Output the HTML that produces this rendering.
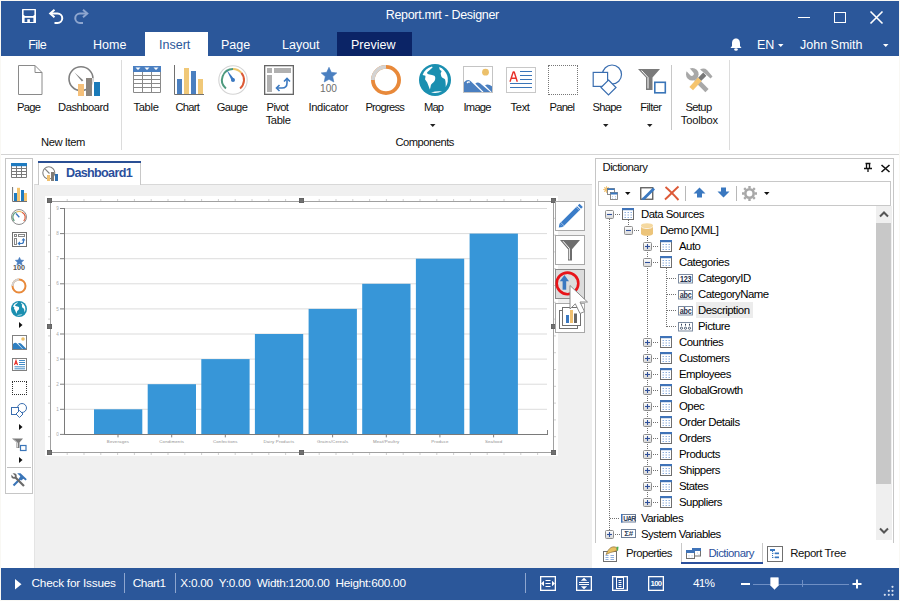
<!DOCTYPE html>
<html><head><meta charset="utf-8"><title>Report.mrt - Designer</title>
<style>
*{margin:0;padding:0;box-sizing:border-box}
html,body{width:900px;height:601px;overflow:hidden}
body{position:relative;background:#f9f8f4;font-family:"Liberation Sans",sans-serif;color:#222}
.a{position:absolute}
.t{position:absolute;white-space:nowrap}
svg{overflow:visible}
</style></head><body>
<div class="a" style="left:1px;top:1px;width:898px;height:55px;background:#2b579a"></div>
<svg class="a" style="left:22px;top:9px" width="15" height="15" viewBox="0 0 15 15"><path d="M0.5 0H13.5Q14 0 14 0.5V13.5Q14 14 13.5 14H0.5Q0 14 0 13.5V0.5Q0 0 0.5 0Z" fill="#fff"/><path d="M1.6 1.3H12.4V5.6L11.2 7H2.8L1.6 5.6Z" fill="#2b579a"/><path d="M2.6 8.8H11.4V13H2.6Z" fill="#2b579a"/><rect x="5.3" y="10.2" width="2.6" height="2.8" fill="#fff"/></svg>
<svg class="a" style="left:49px;top:9px" width="15" height="15" viewBox="0 0 15 15"><path d="M2 4.5H8.5A4.75 4.75 0 0 1 8.5 14H5.5" fill="none" stroke="#fff" stroke-width="2"/><path d="M5.5 0.8L1.2 4.5L5.5 8.2" fill="none" stroke="#fff" stroke-width="2"/></svg>
<svg class="a" style="left:74px;top:9px" width="15" height="15" viewBox="0 0 15 15"><path d="M12.5 4.5H6A4.75 4.75 0 0 0 6 14H9" fill="none" stroke="#8ea6cf" stroke-width="2"/><path d="M9 0.8L13.3 4.5L9 8.2" fill="none" stroke="#8ea6cf" stroke-width="2"/></svg>
<div class="t" style="left:385.8px;top:9.42px;font-size:12.5px;line-height:12.5px;color:#fff;letter-spacing:-0.338px;">Report.mrt - Designer</div>
<div class="a" style="left:798px;top:17px;width:12px;height:1px;background:#fff"></div>
<div class="a" style="left:834px;top:12px;width:12px;height:11px;border:1px solid #fff"></div>
<svg class="a" style="left:870px;top:11px" width="13" height="13" viewBox="0 0 13 13"><path d="M0.5 0.5L12.5 12.5M12.5 0.5L0.5 12.5" stroke="#fff" stroke-width="1.6"/></svg>
<div class="a" style="left:145px;top:32px;width:63px;height:24px;background:#fff"></div>
<div class="a" style="left:337px;top:32px;width:75px;height:24px;background:#0b2466"></div>
<div class="t" style="left:28.3px;top:39.22px;font-size:12.5px;line-height:12.5px;color:#fff;letter-spacing:-0.583px;">File</div>
<div class="t" style="left:93px;top:39.02px;font-size:12.5px;line-height:12.5px;color:#fff;">Home</div>
<div class="t" style="left:159px;top:39.02px;font-size:12.5px;line-height:12.5px;color:#2b579a;">Insert</div>
<div class="t" style="left:221px;top:39.02px;font-size:12.5px;line-height:12.5px;color:#fff;">Page</div>
<div class="t" style="left:282px;top:39.02px;font-size:12.5px;line-height:12.5px;color:#fff;">Layout</div>
<div class="t" style="left:351px;top:38.72px;font-size:12.5px;line-height:12.5px;color:#fff;">Preview</div>
<svg class="a" style="left:730px;top:38px" width="12" height="13" viewBox="0 0 12 13"><path d="M6 0.5C3 0.5 2 3 2 5.5V8L0.5 10H11.5L10 8V5.5C10 3 9 0.5 6 0.5Z" fill="#fff"/><ellipse cx="6" cy="11.5" rx="1.8" ry="1.2" fill="#fff"/></svg>
<div class="t" style="left:757px;top:39.02px;font-size:12.5px;line-height:12.5px;color:#fff;">EN</div>
<svg class="a" style="left:778px;top:44px" width="6" height="4" viewBox="0 0 6 4"><path d="M0 0H5.5L2.75 3Z" fill="#fff"/></svg>
<div class="t" style="left:800px;top:39.02px;font-size:12.5px;line-height:12.5px;color:#fff;">John Smith</div>
<svg class="a" style="left:883px;top:44px" width="6" height="4" viewBox="0 0 6 4"><path d="M0 0H5.5L2.75 3Z" fill="#fff"/></svg>
<div class="a" style="left:1px;top:56px;width:898px;height:98px;background:#fff"></div>
<div class="a" style="left:1px;top:154px;width:898px;height:1px;background:#d4d4d4"></div>
<svg class="a" style="left:18px;top:65px" width="25" height="31" viewBox="0 0 25 31"><path d="M0.5 0.5H17L24 7.5V29.5H0.5Z" fill="#fff" stroke="#8a8a8a"/><path d="M17 0.5V7.5H24" fill="none" stroke="#8a8a8a"/></svg>
<div class="t" style="left:-71px;width:200px;text-align:center;top:101.82px;font-size:11.2px;line-height:11.2px;color:#111;letter-spacing:-0.717px;text-indent:-0.717px;">Page</div>
<svg class="a" style="left:68px;top:65px" width="34" height="32" viewBox="0 0 34 32"><circle cx="13" cy="13.7" r="12" fill="none" stroke="#808080" stroke-width="1.6"/><path d="M6.3 7.3L15.3 15.2L13.9 16.6Z" fill="#808080"/><rect x="10" y="19" width="6" height="12" fill="#f5c07a"/><rect x="18" y="13" width="6" height="18" fill="#8a847e"/><rect x="26" y="17" width="6" height="14" fill="#1a7ab8"/><path d="M24.9 13V20" stroke="#fff" stroke-width="1.2"/></svg>
<div class="t" style="left:-16.5px;width:200px;text-align:center;top:101.82px;font-size:11.2px;line-height:11.2px;color:#111;letter-spacing:-0.475px;text-indent:-0.475px;">Dashboard</div>
<div class="a" style="left:121px;top:60px;width:1px;height:90px;background:#dcdcdc"></div>
<div class="t" style="left:-36.8px;width:200px;text-align:center;top:137.22px;font-size:11.2px;line-height:11.2px;color:#111;letter-spacing:-0.429px;text-indent:-0.429px;">New Item</div>
<svg class="a" style="left:133px;top:66px" width="28" height="27" viewBox="0 0 28 27"><rect x="0" y="0" width="28" height="6" fill="#4a7fc1"/><path d="M2.5 1.5H7.5L5 4Z M11.5 1.5H16.5L14 4Z M20.5 1.5H25.5L23 4Z" fill="#fff"/><path d="M0.5 6V26.5H27.5V6 M0.5 9.5H27.5 M0.5 13.5H27.5 M0.5 17.5H27.5 M0.5 21.5H27.5 M9.5 6V26.5 M18.5 6V26.5" fill="none" stroke="#8a8a8a" stroke-width="1"/></svg>
<div class="t" style="left:46.19999999999999px;width:200px;text-align:center;top:101.82px;font-size:11.2px;line-height:11.2px;color:#111;letter-spacing:-0.300px;text-indent:-0.300px;">Table</div>
<svg class="a" style="left:173px;top:65px" width="32" height="31" viewBox="0 0 32 31"><path d="M1.5 0V29.5H31" fill="none" stroke="#707070" stroke-width="1"/><rect x="4" y="14" width="5" height="15" fill="#4a7fc0"/><rect x="11" y="3" width="5" height="26" fill="#f0c878"/><rect x="18" y="6" width="5" height="23" fill="#4a7fc0"/><rect x="25" y="14" width="5" height="15" fill="#f0c878"/></svg>
<div class="t" style="left:87.69999999999999px;width:200px;text-align:center;top:101.82px;font-size:11.2px;line-height:11.2px;color:#111;letter-spacing:-0.700px;text-indent:-0.700px;">Chart</div>
<svg class="a" style="left:218px;top:65px" width="30" height="30" viewBox="0 0 30 30"><circle cx="15" cy="15" r="14.2" fill="none" stroke="#d4d4d4" stroke-width="1.1"/><path d="M7.93 23.43A11 11 0 0 1 15.00 4.00" fill="none" stroke="#4e9a7e" stroke-width="2"/><path d="M15.00 4.00A11 11 0 0 1 23.43 7.93" fill="none" stroke="#ecc46a" stroke-width="2"/><path d="M23.43 7.93A11 11 0 0 1 22.07 23.43" fill="none" stroke="#dc5a36" stroke-width="2"/><path d="M8.4 4.6L16.1 14.1L13.9 15.9Z" fill="#3a78c0"/><circle cx="15" cy="15" r="2" fill="#3a78c0"/></svg>
<div class="t" style="left:132.3px;width:200px;text-align:center;top:101.82px;font-size:11.2px;line-height:11.2px;color:#111;letter-spacing:-0.562px;text-indent:-0.562px;">Gauge</div>
<svg class="a" style="left:264px;top:65px" width="30" height="30" viewBox="0 0 30 30"><rect x="0.65" y="0.65" width="28.7" height="28.7" fill="#fff" stroke="#666" stroke-width="1.3"/><rect x="3" y="3" width="5" height="5" fill="#b0b0b0"/><rect x="10" y="3" width="17" height="5" fill="#b0b0b0"/><rect x="3" y="10" width="5" height="17" fill="#b0b0b0"/><path d="M13 23H18Q23 23 23 18V14" fill="none" stroke="#3a78c0" stroke-width="1.6"/><path d="M15.5 20L12.5 23L15.5 26 M20 16.5L23 13.5L26 16.5" fill="none" stroke="#3a78c0" stroke-width="1.6"/></svg>
<div class="t" style="left:177.8px;width:200px;text-align:center;top:101.82px;font-size:11.2px;line-height:11.2px;color:#111;letter-spacing:-0.625px;text-indent:-0.625px;">Pivot</div>
<div class="t" style="left:178.3px;width:200px;text-align:center;top:114.82px;font-size:11.2px;line-height:11.2px;color:#111;letter-spacing:-0.350px;text-indent:-0.350px;">Table</div>
<svg class="a" style="left:321px;top:67px" width="16" height="16" viewBox="0 0 16 16"><path d="M8 0.3L10.3 5.3L15.8 5.9L11.7 9.6L12.8 15L8 12.3L3.2 15L4.3 9.6L0.2 5.9L5.7 5.3Z" fill="#4a7fc0" stroke="#4a7fc0" stroke-width="0.6" stroke-linejoin="round"/></svg>
<div class="t" style="left:228.5px;width:200px;text-align:center;top:84.17px;font-size:10.2px;line-height:10.2px;color:#6e6e6e;">100</div>
<div class="t" style="left:228.45px;width:200px;text-align:center;top:101.82px;font-size:11.2px;line-height:11.2px;color:#111;letter-spacing:-0.381px;text-indent:-0.381px;">Indicator</div>
<svg class="a" style="left:370px;top:64px" width="32" height="32" viewBox="0 0 32 32"><circle cx="16" cy="16" r="13.1" fill="none" stroke="#e8893a" stroke-width="3.8"/><path d="M16 2.9A13.1 13.1 0 0 0 2.9 16" fill="none" stroke="#d3d3d3" stroke-width="3.8"/></svg>
<div class="t" style="left:285.15px;width:200px;text-align:center;top:101.82px;font-size:11.2px;line-height:11.2px;color:#111;letter-spacing:-0.757px;text-indent:-0.757px;">Progress</div>
<svg class="a" style="left:419px;top:64px" width="32" height="32" viewBox="0 0 32 32"><circle cx="16" cy="16" r="16" fill="#1a8fb0"/><path d="M13 2.6A13.5 13.5 0 0 0 3.6 11L6.4 11.8C6.6 13 6.1 14.5 6.1 15.4C6.8 16.5 7.6 17.4 8.2 18.4C9.2 20.5 10 23 10.9 25.5C11.5 24 11.6 22.2 12 20.8C13.2 19 15.5 17.8 16 16C16.4 14.5 16.3 13.4 16 12.4C15.2 11.4 14 11.1 13 10.9C11.4 10.6 9.8 10.5 8.5 9.7C8 9.2 8 8.6 8.2 8.2L13.6 3.4Z M20.2 3.1C20.3 4.2 20.5 5.2 20.8 5.8C21.5 6.3 22.3 6.6 22.6 7C22.4 8 21.7 8.8 21.7 9.7C21.9 11 22.2 12.2 22.6 13C23.6 14 25.2 14.6 26.1 15.4C26.8 18 26.7 20.6 26.7 23.1A13.5 13.5 0 0 0 20.2 3.1Z M12 28.5Q17 26.8 23.1 27.3Q18 29.8 12 28.5Z" fill="#fff"/></svg>
<div class="t" style="left:334px;width:200px;text-align:center;top:101.82px;font-size:11.2px;line-height:11.2px;color:#111;letter-spacing:-0.900px;text-indent:-0.900px;">Map</div>
<svg class="a" style="left:429.5px;top:124px" width="6" height="3" viewBox="0 0 6 3"><path d="M0 0H5.5L2.75 3Z" fill="#222"/></svg>
<svg class="a" style="left:463px;top:66px" width="30" height="27" viewBox="0 0 30 27"><rect x="0.5" y="0.5" width="29" height="26" fill="#fff" stroke="#c4c4c4"/><circle cx="22.5" cy="6.2" r="3.4" fill="#ecc06a"/><path d="M1 16.3Q4.5 12.5 7.5 15L19 26H1Z" fill="#4a7fc0"/><path d="M12.3 17.6Q14.5 15.4 17 17.2L27.4 26H20.6Z" fill="#4a7fc0"/><path d="M22 19.2Q25 17.2 29 20.2V26H28.6Z" fill="#4a7fc0"/><path d="M3.5 16.3Q5 14.6 7 15.6L6.5 17L5.5 16.5L4.5 17.5Z" fill="#fff"/></svg>
<div class="t" style="left:377.5px;width:200px;text-align:center;top:101.82px;font-size:11.2px;line-height:11.2px;color:#111;letter-spacing:-0.737px;text-indent:-0.737px;">Image</div>
<svg class="a" style="left:506px;top:67px" width="30" height="26" viewBox="0 0 30 26"><rect x="0.5" y="0.5" width="29" height="25" fill="#fff" stroke="#c8c8c8"/><path d="M4 14.8L7.2 5H8.2L11.3 14.8 M5.3 11.2H10" fill="none" stroke="#e8312a" stroke-width="1.4" stroke-linejoin="bevel"/><path d="M14 4.5H26 M14 8.5H26 M14 12.5H26 M4 16.5H26 M4 20.5H26" stroke="#3a75b8" stroke-width="1.1"/></svg>
<div class="t" style="left:420.25px;width:200px;text-align:center;top:101.82px;font-size:11.2px;line-height:11.2px;color:#111;letter-spacing:-0.350px;text-indent:-0.350px;">Text</div>
<div class="a" style="left:548px;top:65px;width:30px;height:30px;border:1px dotted #777"></div>
<div class="t" style="left:462.25px;width:200px;text-align:center;top:101.82px;font-size:11.2px;line-height:11.2px;color:#111;letter-spacing:-0.787px;text-indent:-0.787px;">Panel</div>
<svg class="a" style="left:592px;top:64px" width="32" height="32" viewBox="0 0 32 32"><circle cx="20" cy="10.5" r="9.5" fill="#fff" stroke="#3a6eb0" stroke-width="1.2"/><rect x="1.2" y="8.4" width="14.4" height="14" fill="#fff" stroke="#3a6eb0" stroke-width="1.2"/><path d="M16.5 16L24 23.5L16.5 31L9 23.5Z" fill="#fff" stroke="#3a6eb0" stroke-width="1.2"/></svg>
<div class="t" style="left:507.25px;width:200px;text-align:center;top:101.82px;font-size:11.2px;line-height:11.2px;color:#111;letter-spacing:-0.675px;text-indent:-0.675px;">Shape</div>
<svg class="a" style="left:602.5px;top:124px" width="6" height="3" viewBox="0 0 6 3"><path d="M0 0H5.5L2.75 3Z" fill="#222"/></svg>
<svg class="a" style="left:638px;top:68px" width="30" height="27" viewBox="0 0 30 27"><path d="M0 1H22L14.5 9.5V22H8V9.5Z" fill="#7a7a7a"/><path d="M3.5 2.5L10 9.5V20.5" fill="none" stroke="#fff" stroke-width="1"/><rect x="16.8" y="14.3" width="10.5" height="10.5" fill="#fff" stroke="#3a75b8" stroke-width="1.6"/></svg>
<div class="t" style="left:551.1px;width:200px;text-align:center;top:101.82px;font-size:11.2px;line-height:11.2px;color:#111;letter-spacing:-0.620px;text-indent:-0.620px;">Filter</div>
<svg class="a" style="left:646.5px;top:124px" width="6" height="3" viewBox="0 0 6 3"><path d="M0 0H5.5L2.75 3Z" fill="#222"/></svg>
<div class="a" style="left:671px;top:65px;width:1px;height:65px;background:#c8c8c8"></div>
<svg class="a" style="left:684px;top:67px" width="30" height="26" viewBox="0 0 30 26"><path d="M11.8 12.4L23 23.6" stroke="#a8a8a8" stroke-width="4.5"/><circle cx="8.3" cy="7.3" r="6.3" fill="#a8a8a8"/><path d="M3 1.5L7.8 6.8" stroke="#fff" stroke-width="4.2" stroke-linecap="round"/><path d="M16 2.5Q20 0.5 23 3L28.5 9.5L26.5 11.5L21.5 7Z" fill="#a8a8a8"/><path d="M20.8 7.2L15.5 12.5" stroke="#787878" stroke-width="4.5"/><path d="M15.8 12.2L7.2 21.6" stroke="#f5c46e" stroke-width="5"/></svg>
<div class="t" style="left:598.8px;width:200px;text-align:center;top:101.82px;font-size:11.2px;line-height:11.2px;color:#111;letter-spacing:-0.612px;text-indent:-0.612px;">Setup</div>
<div class="t" style="left:599.4px;width:200px;text-align:center;top:114.82px;font-size:11.2px;line-height:11.2px;color:#111;letter-spacing:-0.233px;text-indent:-0.233px;">Toolbox</div>
<div class="a" style="left:729px;top:60px;width:1px;height:90px;background:#dcdcdc"></div>
<div class="t" style="left:324.95px;width:200px;text-align:center;top:137.12px;font-size:11.2px;line-height:11.2px;color:#111;letter-spacing:-0.511px;text-indent:-0.511px;">Components</div>
<div class="a" style="left:1px;top:155px;width:898px;height:413px;background:#fff"></div>
<div class="a" style="left:5px;top:158px;width:28px;height:336px;border:1px solid #c6c6c6;background:#fff"></div>
<svg class="a" style="left:11px;top:163px" width="17" height="16" viewBox="0 0 17 16"><rect x="0" y="0" width="16" height="3.2" fill="#1f7bc0"/><path d="M0.5 3V14.5H15.5V3 M0.5 5.5H15.5 M0.5 8.5H15.5 M0.5 11.5H15.5 M5.5 3V14.5 M10.5 3V14.5" fill="none" stroke="#7a7a7a" stroke-width="1"/></svg>
<svg class="a" style="left:11px;top:187px" width="17" height="16" viewBox="0 0 17 16"><path d="M1.6 0V14.5H16" fill="none" stroke="#707070" stroke-width="1"/><rect x="3" y="6" width="3" height="8" fill="#1f7bc0"/><rect x="6" y="0.8" width="3" height="13.2" fill="#f5c46e"/><rect x="10" y="3" width="3" height="11" fill="#1f7bc0"/><rect x="13" y="6" width="3" height="8" fill="#f5c46e"/></svg>
<svg class="a" style="left:11px;top:209px" width="16" height="16" viewBox="0 0 16 16"><circle cx="8" cy="8" r="7.5" fill="none" stroke="#808080" stroke-width="0.9"/><path d="M3.3 12A5.5 5.5 0 0 1 5.5 3" fill="none" stroke="#5a9a7a" stroke-width="1.2"/><path d="M5.5 3A5.5 5.5 0 0 1 11 3.2" fill="none" stroke="#ecc06a" stroke-width="1.2"/><path d="M11 3.2A5.5 5.5 0 0 1 12.7 12" fill="none" stroke="#de5c3a" stroke-width="1.2"/><path d="M5 4.5L8.3 8.3" stroke="#3a78c0" stroke-width="1.3"/></svg>
<svg class="a" style="left:12px;top:232px" width="15" height="15" viewBox="0 0 15 15"><rect x="0.5" y="0.5" width="14" height="14" fill="#fff" stroke="#707070"/><rect x="2.5" y="2.5" width="2" height="2" fill="#fff" stroke="#888" stroke-width="1"/><rect x="6.5" y="2.5" width="6" height="2" fill="#fff" stroke="#888" stroke-width="1"/><rect x="2.5" y="6.5" width="2" height="6" fill="#fff" stroke="#888" stroke-width="1"/><path d="M6.5 11.5H9.5Q11.5 11.5 11.5 9.5V7" fill="none" stroke="#3a78c0" stroke-width="1.2"/><path d="M8 10L6.3 11.5L8 13 M10 8.5L11.5 6.8L13 8.5" fill="none" stroke="#3a78c0" stroke-width="1.1"/></svg>
<svg class="a" style="left:14.5px;top:256.5px" width="9" height="9" viewBox="0 0 9 9"><path d="M4.5 0.3L5.8 3L8.8 3.3L6.6 5.3L7.2 8.3L4.5 6.8L1.8 8.3L2.4 5.3L0.2 3.3L3.2 3Z" fill="#4a7fc0" stroke="#4a7fc0" stroke-width="0.5" stroke-linejoin="round"/></svg>
<div class="t" style="left:-81px;width:200px;text-align:center;top:264.21px;font-size:7.2px;line-height:7.2px;color:#555;font-weight:bold">100</div>
<svg class="a" style="left:11px;top:278px" width="16" height="16" viewBox="0 0 16 16"><circle cx="8" cy="8" r="6.5" fill="none" stroke="#e8893a" stroke-width="2"/><path d="M8 1.5A6.5 6.5 0 0 0 1.5 8" fill="none" stroke="#d3d3d3" stroke-width="2"/></svg>
<svg class="a" style="left:11px;top:301px" width="16" height="16" viewBox="0 0 16 16"><g transform="scale(0.5)"><circle cx="16" cy="16" r="16" fill="#1a8fb0"/><path d="M13 2.6A13.5 13.5 0 0 0 3.6 11L6.4 11.8C6.6 13 6.1 14.5 6.1 15.4C6.8 16.5 7.6 17.4 8.2 18.4C9.2 20.5 10 23 10.9 25.5C11.5 24 11.6 22.2 12 20.8C13.2 19 15.5 17.8 16 16C16.4 14.5 16.3 13.4 16 12.4C15.2 11.4 14 11.1 13 10.9C11.4 10.6 9.8 10.5 8.5 9.7C8 9.2 8 8.6 8.2 8.2L13.6 3.4Z M20.2 3.1C20.3 4.2 20.5 5.2 20.8 5.8C21.5 6.3 22.3 6.6 22.6 7C22.4 8 21.7 8.8 21.7 9.7C21.9 11 22.2 12.2 22.6 13C23.6 14 25.2 14.6 26.1 15.4C26.8 18 26.7 20.6 26.7 23.1A13.5 13.5 0 0 0 20.2 3.1Z M12 28.5Q17 26.8 23.1 27.3Q18 29.8 12 28.5Z" fill="#fff"/></g></svg>
<svg class="a" style="left:19px;top:322px" width="4" height="6" viewBox="0 0 4 6"><path d="M0 0L3.5 3L0 6Z" fill="#111"/></svg>
<svg class="a" style="left:12px;top:335px" width="15" height="15" viewBox="0 0 15 15"><rect x="0.5" y="0.5" width="14" height="14" fill="#fff" stroke="#808080"/><circle cx="11" cy="4" r="1.8" fill="#ecc06a"/><path d="M1 14V9C2.5 7.5 4 7.5 5 8.5L10.5 14Z M6 8.5C7 7.5 8.5 8 9.5 9L14 13.5V14H11Z" fill="#2f7fc1"/></svg>
<svg class="a" style="left:12px;top:358px" width="15" height="13" viewBox="0 0 15 13"><rect x="0.5" y="0.5" width="14" height="12" fill="#fff" stroke="#808080"/><path d="M2.5 7L4 2.5L5.5 7 M3 5.5H5" fill="none" stroke="#e8312a" stroke-width="1.1"/><path d="M7 2.5H13 M7 4.5H13 M7 6.5H13 M2.5 8.8H13 M2.5 10.8H13" stroke="#2f7fc1" stroke-width="0.9"/></svg>
<div class="a" style="left:12px;top:381px;width:15px;height:14px;border:1px dotted #303030"></div>
<svg class="a" style="left:11px;top:403px" width="16" height="16" viewBox="0 0 16 16"><circle cx="11" cy="5" r="4.5" fill="#fff" stroke="#3a6eb0" stroke-width="1"/><rect x="0.5" y="4.5" width="7" height="7" fill="#fff" stroke="#3a6eb0" stroke-width="1"/><path d="M8.5 7.5L12 11L8.5 14.5L5 11Z" fill="#fff" stroke="#3a6eb0" stroke-width="1"/></svg>
<svg class="a" style="left:19px;top:424px" width="4" height="6" viewBox="0 0 4 6"><path d="M0 0L3.5 3L0 6Z" fill="#111"/></svg>
<svg class="a" style="left:12px;top:438px" width="15" height="13" viewBox="0 0 15 13"><path d="M0 0.5H11L7.5 4.5V10H4.5V4.5Z" fill="#7a7a7a"/><path d="M2 1.5L5.5 5V9.5" fill="none" stroke="#fff" stroke-width="0.7"/><rect x="8.5" y="7.5" width="5.5" height="5" fill="#fff" stroke="#3a75b8" stroke-width="1.2"/></svg>
<svg class="a" style="left:19px;top:457px" width="4" height="6" viewBox="0 0 4 6"><path d="M0 0L3.5 3L0 6Z" fill="#111"/></svg>
<div class="a" style="left:7px;top:467px;width:24px;height:1px;background:#c0c0c0"></div>
<svg class="a" style="left:11px;top:473px" width="17" height="14" viewBox="0 0 17 14"><path d="M9.5 5.5L2.5 12.5" stroke="#3a75b8" stroke-width="2.2"/><path d="M6.2 0.3H9.5L14 4.5L15.8 6.3L14.4 7.6L12.5 5.8L10.2 7.6L8.2 5.3L9.3 3.2Z" fill="#3a75b8"/><path d="M4 4L13 13" stroke="#6a6a6a" stroke-width="2.2"/><circle cx="3" cy="3" r="2.7" fill="#6a6a6a"/><path d="M0.8 0.8L3 3" stroke="#fff" stroke-width="1.8" stroke-linecap="round"/></svg>
<div class="a" style="left:34px;top:184px;width:558px;height:384px;background:#f0f0f0;border-top:1px solid #d8d8d8;border-left:1px solid #e4e4e4"></div>
<div class="a" style="left:38px;top:161px;width:103px;height:24px;background:#fff;border-left:1px solid #c8c8c8;border-right:1px solid #c8c8c8"></div>
<div class="a" style="left:38px;top:161px;width:103px;height:2px;background:#2a4f94"></div>
<svg class="a" style="left:42px;top:166px" width="17" height="16" viewBox="0 0 17 16"><circle cx="6.8" cy="6.8" r="6" fill="none" stroke="#808080" stroke-width="1.1"/><path d="M3.2 3.2L7.5 7.5" stroke="#808080" stroke-width="1.1"/><rect x="5" y="9" width="3" height="6" fill="#f0c070"/><rect x="9" y="6" width="3" height="9" fill="#807b76"/><rect x="13" y="8" width="3" height="7" fill="#2f6fb0"/></svg>
<div class="t" style="left:66px;top:166.93px;font-size:12.6px;line-height:12.6px;color:#2a4f9c;letter-spacing:-0.678px;font-weight:bold">Dashboard1</div>
<div class="a" style="left:45px;top:196px;width:513px;height:260px;background:#fff"></div>
<div class="a" style="left:50px;top:201px;width:504px;height:1px;background:#a0a0a0"></div>
<div class="a" style="left:50px;top:452px;width:504px;height:1px;background:#a0a0a0"></div>
<div class="a" style="left:50px;top:201px;width:1px;height:252px;background:#a0a0a0"></div>
<div class="a" style="left:553px;top:201px;width:1px;height:252px;background:#a0a0a0"></div>
<svg class="a" style="left:0;top:0" width="900" height="601"><rect x="66.7" y="199" width="1" height="2" fill="#d0d0d0"/><rect x="66.7" y="453" width="1" height="2" fill="#d0d0d0"/><rect x="83.5" y="199" width="1" height="2" fill="#d0d0d0"/><rect x="83.5" y="453" width="1" height="2" fill="#d0d0d0"/><rect x="100.3" y="199" width="1" height="2" fill="#d0d0d0"/><rect x="100.3" y="453" width="1" height="2" fill="#d0d0d0"/><rect x="117.1" y="199" width="1" height="2" fill="#d0d0d0"/><rect x="117.1" y="453" width="1" height="2" fill="#d0d0d0"/><rect x="133.9" y="199" width="1" height="2" fill="#d0d0d0"/><rect x="133.9" y="453" width="1" height="2" fill="#d0d0d0"/><rect x="150.7" y="199" width="1" height="2" fill="#d0d0d0"/><rect x="150.7" y="453" width="1" height="2" fill="#d0d0d0"/><rect x="167.5" y="199" width="1" height="2" fill="#d0d0d0"/><rect x="167.5" y="453" width="1" height="2" fill="#d0d0d0"/><rect x="184.3" y="199" width="1" height="2" fill="#d0d0d0"/><rect x="184.3" y="453" width="1" height="2" fill="#d0d0d0"/><rect x="201.1" y="199" width="1" height="2" fill="#d0d0d0"/><rect x="201.1" y="453" width="1" height="2" fill="#d0d0d0"/><rect x="217.9" y="199" width="1" height="2" fill="#d0d0d0"/><rect x="217.9" y="453" width="1" height="2" fill="#d0d0d0"/><rect x="234.7" y="199" width="1" height="2" fill="#d0d0d0"/><rect x="234.7" y="453" width="1" height="2" fill="#d0d0d0"/><rect x="251.5" y="199" width="1" height="2" fill="#d0d0d0"/><rect x="251.5" y="453" width="1" height="2" fill="#d0d0d0"/><rect x="268.3" y="199" width="1" height="2" fill="#d0d0d0"/><rect x="268.3" y="453" width="1" height="2" fill="#d0d0d0"/><rect x="285.1" y="199" width="1" height="2" fill="#d0d0d0"/><rect x="285.1" y="453" width="1" height="2" fill="#d0d0d0"/><rect x="301.9" y="199" width="1" height="2" fill="#d0d0d0"/><rect x="301.9" y="453" width="1" height="2" fill="#d0d0d0"/><rect x="318.7" y="199" width="1" height="2" fill="#d0d0d0"/><rect x="318.7" y="453" width="1" height="2" fill="#d0d0d0"/><rect x="335.5" y="199" width="1" height="2" fill="#d0d0d0"/><rect x="335.5" y="453" width="1" height="2" fill="#d0d0d0"/><rect x="352.3" y="199" width="1" height="2" fill="#d0d0d0"/><rect x="352.3" y="453" width="1" height="2" fill="#d0d0d0"/><rect x="369.1" y="199" width="1" height="2" fill="#d0d0d0"/><rect x="369.1" y="453" width="1" height="2" fill="#d0d0d0"/><rect x="385.9" y="199" width="1" height="2" fill="#d0d0d0"/><rect x="385.9" y="453" width="1" height="2" fill="#d0d0d0"/><rect x="402.7" y="199" width="1" height="2" fill="#d0d0d0"/><rect x="402.7" y="453" width="1" height="2" fill="#d0d0d0"/><rect x="419.5" y="199" width="1" height="2" fill="#d0d0d0"/><rect x="419.5" y="453" width="1" height="2" fill="#d0d0d0"/><rect x="436.3" y="199" width="1" height="2" fill="#d0d0d0"/><rect x="436.3" y="453" width="1" height="2" fill="#d0d0d0"/><rect x="453.1" y="199" width="1" height="2" fill="#d0d0d0"/><rect x="453.1" y="453" width="1" height="2" fill="#d0d0d0"/><rect x="469.9" y="199" width="1" height="2" fill="#d0d0d0"/><rect x="469.9" y="453" width="1" height="2" fill="#d0d0d0"/><rect x="486.7" y="199" width="1" height="2" fill="#d0d0d0"/><rect x="486.7" y="453" width="1" height="2" fill="#d0d0d0"/><rect x="503.5" y="199" width="1" height="2" fill="#d0d0d0"/><rect x="503.5" y="453" width="1" height="2" fill="#d0d0d0"/><rect x="520.3" y="199" width="1" height="2" fill="#d0d0d0"/><rect x="520.3" y="453" width="1" height="2" fill="#d0d0d0"/><rect x="537.1" y="199" width="1" height="2" fill="#d0d0d0"/><rect x="537.1" y="453" width="1" height="2" fill="#d0d0d0"/><rect x="48" y="217.8" width="2" height="1" fill="#d0d0d0"/><rect x="554" y="217.8" width="2" height="1" fill="#d0d0d0"/><rect x="48" y="234.6" width="2" height="1" fill="#d0d0d0"/><rect x="554" y="234.6" width="2" height="1" fill="#d0d0d0"/><rect x="48" y="251.4" width="2" height="1" fill="#d0d0d0"/><rect x="554" y="251.4" width="2" height="1" fill="#d0d0d0"/><rect x="48" y="268.2" width="2" height="1" fill="#d0d0d0"/><rect x="554" y="268.2" width="2" height="1" fill="#d0d0d0"/><rect x="48" y="285.0" width="2" height="1" fill="#d0d0d0"/><rect x="554" y="285.0" width="2" height="1" fill="#d0d0d0"/><rect x="48" y="301.8" width="2" height="1" fill="#d0d0d0"/><rect x="554" y="301.8" width="2" height="1" fill="#d0d0d0"/><rect x="48" y="318.6" width="2" height="1" fill="#d0d0d0"/><rect x="554" y="318.6" width="2" height="1" fill="#d0d0d0"/><rect x="48" y="335.4" width="2" height="1" fill="#d0d0d0"/><rect x="554" y="335.4" width="2" height="1" fill="#d0d0d0"/><rect x="48" y="352.2" width="2" height="1" fill="#d0d0d0"/><rect x="554" y="352.2" width="2" height="1" fill="#d0d0d0"/><rect x="48" y="369.0" width="2" height="1" fill="#d0d0d0"/><rect x="554" y="369.0" width="2" height="1" fill="#d0d0d0"/><rect x="48" y="385.8" width="2" height="1" fill="#d0d0d0"/><rect x="554" y="385.8" width="2" height="1" fill="#d0d0d0"/><rect x="48" y="402.6" width="2" height="1" fill="#d0d0d0"/><rect x="554" y="402.6" width="2" height="1" fill="#d0d0d0"/><rect x="48" y="419.4" width="2" height="1" fill="#d0d0d0"/><rect x="554" y="419.4" width="2" height="1" fill="#d0d0d0"/><rect x="48" y="436.2" width="2" height="1" fill="#d0d0d0"/><rect x="554" y="436.2" width="2" height="1" fill="#d0d0d0"/></svg>
<svg class="a" style="left:0;top:0" width="900" height="601"><rect x="60" y="433.9" width="4" height="1" fill="#808080"/><text x="57.5" y="436.0" font-size="4.6" fill="#a8a8a8" text-anchor="middle" font-family="Liberation Sans">0</text><rect x="64" y="408.8" width="483" height="1" fill="#dcdcdc"/><rect x="60" y="408.8" width="4" height="1" fill="#808080"/><text x="57.5" y="410.9" font-size="4.6" fill="#a8a8a8" text-anchor="middle" font-family="Liberation Sans">1</text><rect x="64" y="383.7" width="483" height="1" fill="#dcdcdc"/><rect x="60" y="383.7" width="4" height="1" fill="#808080"/><text x="57.5" y="385.8" font-size="4.6" fill="#a8a8a8" text-anchor="middle" font-family="Liberation Sans">2</text><rect x="64" y="358.6" width="483" height="1" fill="#dcdcdc"/><rect x="60" y="358.6" width="4" height="1" fill="#808080"/><text x="57.5" y="360.7" font-size="4.6" fill="#a8a8a8" text-anchor="middle" font-family="Liberation Sans">3</text><rect x="64" y="333.5" width="483" height="1" fill="#dcdcdc"/><rect x="60" y="333.5" width="4" height="1" fill="#808080"/><text x="57.5" y="335.6" font-size="4.6" fill="#a8a8a8" text-anchor="middle" font-family="Liberation Sans">4</text><rect x="64" y="308.4" width="483" height="1" fill="#dcdcdc"/><rect x="60" y="308.4" width="4" height="1" fill="#808080"/><text x="57.5" y="310.5" font-size="4.6" fill="#a8a8a8" text-anchor="middle" font-family="Liberation Sans">5</text><rect x="64" y="283.3" width="483" height="1" fill="#dcdcdc"/><rect x="60" y="283.3" width="4" height="1" fill="#808080"/><text x="57.5" y="285.4" font-size="4.6" fill="#a8a8a8" text-anchor="middle" font-family="Liberation Sans">6</text><rect x="64" y="258.2" width="483" height="1" fill="#dcdcdc"/><rect x="60" y="258.2" width="4" height="1" fill="#808080"/><text x="57.5" y="260.3" font-size="4.6" fill="#a8a8a8" text-anchor="middle" font-family="Liberation Sans">7</text><rect x="64" y="233.1" width="483" height="1" fill="#dcdcdc"/><rect x="60" y="233.1" width="4" height="1" fill="#808080"/><text x="57.5" y="235.2" font-size="4.6" fill="#a8a8a8" text-anchor="middle" font-family="Liberation Sans">8</text><rect x="64" y="208.0" width="483" height="1" fill="#dcdcdc"/><rect x="60" y="208.0" width="4" height="1" fill="#808080"/><text x="57.5" y="210.1" font-size="4.6" fill="#a8a8a8" text-anchor="middle" font-family="Liberation Sans">9</text><rect x="94.0" y="409.3" width="48.3" height="25.1" fill="#3796d8"/><rect x="117.5" y="434.4" width="1" height="3" fill="#808080"/><text x="118.0" y="442.8" font-size="4.4" fill="#909090" letter-spacing="0.15" text-anchor="middle" font-family="Liberation Sans">Beverages</text><rect x="147.7" y="384.2" width="48.3" height="50.2" fill="#3796d8"/><rect x="171.2" y="434.4" width="1" height="3" fill="#808080"/><text x="171.7" y="442.8" font-size="4.4" fill="#909090" letter-spacing="0.15" text-anchor="middle" font-family="Liberation Sans">Condiments</text><rect x="201.3" y="359.1" width="48.3" height="75.3" fill="#3796d8"/><rect x="224.8" y="434.4" width="1" height="3" fill="#808080"/><text x="225.3" y="442.8" font-size="4.4" fill="#909090" letter-spacing="0.15" text-anchor="middle" font-family="Liberation Sans">Confections</text><rect x="254.9" y="334.0" width="48.3" height="100.4" fill="#3796d8"/><rect x="278.4" y="434.4" width="1" height="3" fill="#808080"/><text x="278.9" y="442.8" font-size="4.4" fill="#909090" letter-spacing="0.15" text-anchor="middle" font-family="Liberation Sans">Dairy Products</text><rect x="308.6" y="308.9" width="48.3" height="125.5" fill="#3796d8"/><rect x="332.1" y="434.4" width="1" height="3" fill="#808080"/><text x="332.6" y="442.8" font-size="4.4" fill="#909090" letter-spacing="0.15" text-anchor="middle" font-family="Liberation Sans">Grains/Cereals</text><rect x="362.2" y="283.8" width="48.3" height="150.6" fill="#3796d8"/><rect x="385.8" y="434.4" width="1" height="3" fill="#808080"/><text x="386.2" y="442.8" font-size="4.4" fill="#909090" letter-spacing="0.15" text-anchor="middle" font-family="Liberation Sans">Meat/Poultry</text><rect x="415.9" y="258.7" width="48.3" height="175.7" fill="#3796d8"/><rect x="439.4" y="434.4" width="1" height="3" fill="#808080"/><text x="439.9" y="442.8" font-size="4.4" fill="#909090" letter-spacing="0.15" text-anchor="middle" font-family="Liberation Sans">Produce</text><rect x="469.6" y="233.6" width="48.3" height="200.8" fill="#3796d8"/><rect x="493.1" y="434.4" width="1" height="3" fill="#808080"/><text x="493.6" y="442.8" font-size="4.4" fill="#909090" letter-spacing="0.15" text-anchor="middle" font-family="Liberation Sans">Seafood</text><rect x="64" y="208" width="1" height="227" fill="#7a7a7a"/><rect x="64" y="434" width="484" height="1" fill="#7a7a7a"/><rect x="547" y="430" width="1" height="4" fill="#808080"/></svg>
<div class="a" style="left:47px;top:198px;width:5px;height:5px;background:#707070;box-shadow:inset 0 0 0 0.5px #5a5a5a"></div>
<div class="a" style="left:299px;top:198px;width:5px;height:5px;background:#707070;box-shadow:inset 0 0 0 0.5px #5a5a5a"></div>
<div class="a" style="left:551px;top:198px;width:5px;height:5px;background:#707070;box-shadow:inset 0 0 0 0.5px #5a5a5a"></div>
<div class="a" style="left:47px;top:324px;width:5px;height:5px;background:#707070;box-shadow:inset 0 0 0 0.5px #5a5a5a"></div>
<div class="a" style="left:551px;top:324px;width:5px;height:5px;background:#707070;box-shadow:inset 0 0 0 0.5px #5a5a5a"></div>
<div class="a" style="left:47px;top:450px;width:5px;height:5px;background:#707070;box-shadow:inset 0 0 0 0.5px #5a5a5a"></div>
<div class="a" style="left:299px;top:450px;width:5px;height:5px;background:#707070;box-shadow:inset 0 0 0 0.5px #5a5a5a"></div>
<div class="a" style="left:551px;top:450px;width:5px;height:5px;background:#707070;box-shadow:inset 0 0 0 0.5px #5a5a5a"></div>
<div class="a" style="left:555px;top:201px;width:30px;height:30px;background:#fff;border:1px solid #a8a8a8"></div>
<div class="a" style="left:555px;top:235px;width:30px;height:30px;background:#fff;border:1px solid #a8a8a8"></div>
<div class="a" style="left:555px;top:269px;width:30px;height:30px;background:#dcdcdc;border:1px solid #8a8a8a"></div>
<div class="a" style="left:555px;top:303px;width:30px;height:30px;background:#fff;border:1px solid #a8a8a8"></div>
<svg class="a" style="left:555px;top:201px" width="30" height="30" viewBox="0 0 30 30"><path d="M4.5 22.7L22 5.2L25.3 8.5L7.8 26Z" fill="#3a7cc8"/><path d="M22.8 4.4L24.5 2.7L27.8 6L26.1 7.7Z" fill="#3a7cc8"/><path d="M4.5 22.7L3.8 26.5L7.8 26Z" fill="#3a7cc8"/><path d="M5.8 21.5L9 24.7" stroke="#a8c8ec" stroke-width="1"/><path d="M21.2 6.3L24.3 9.4" stroke="#a8c8ec" stroke-width="0.8"/></svg>
<svg class="a" style="left:555px;top:235px" width="30" height="30" viewBox="0 0 30 30"><path d="M5 5H25L17 14.2V25.5H13V14.2Z" fill="#6e6e6e"/><path d="M8 6.2L14.3 13.3V24.5" fill="none" stroke="#fff" stroke-width="1"/></svg>
<svg class="a" style="left:555px;top:269px" width="30" height="30" viewBox="0 0 30 30"><circle cx="12.5" cy="14.4" r="10.8" fill="none" stroke="#e8141a" stroke-width="2.6"/><path d="M4.8 12.2H14L9.4 6Z" fill="#3a78c0"/><rect x="7.6" y="11.5" width="3.6" height="9.2" fill="#3a78c0"/></svg>
<svg class="a" style="left:555px;top:303px" width="30" height="30" viewBox="0 0 30 30"><rect x="4.5" y="7.5" width="18" height="18" fill="#fff" stroke="#707070"/><rect x="7.5" y="4.5" width="18" height="18" fill="#fff" stroke="#707070"/><rect x="11" y="12" width="3" height="8" fill="#3a78c0"/><rect x="15" y="7" width="3" height="13" fill="#f0c070"/><rect x="19" y="10.5" width="3" height="9.5" fill="#666"/></svg>
<svg class="a" style="left:568px;top:284px" width="24" height="32" viewBox="0 0 24 32"><path d="M2 1.5V25L7.3 19.8L12 29.5L16.5 27.6L12 18H19.5Z" fill="#fff" stroke="#8a8a8a" stroke-width="1" stroke-linejoin="round"/></svg>
<div class="a" style="left:595px;top:158px;width:299px;height:385px;border:1px solid #c6c6c6;border-bottom:none;background:#fff"></div>
<div class="t" style="left:602.5px;top:162.35px;font-size:11.4px;line-height:11.4px;color:#111;letter-spacing:-0.578px;">Dictionary</div>
<svg class="a" style="left:864px;top:163px" width="8" height="9" viewBox="0 0 8 9"><path d="M1.5 0.5H6.5 M2.5 0.5V5.5 M5.5 0.5V5.5 M0 5.5H8 M4 5.5V9" fill="none" stroke="#111" stroke-width="1.3"/></svg>
<svg class="a" style="left:881px;top:165px" width="9" height="7" viewBox="0 0 9 7"><path d="M0.5 0L8.5 7M8.5 0L0.5 7" stroke="#111" stroke-width="1.6"/></svg>
<div class="a" style="left:598px;top:181px;width:293px;height:25px;border:1px solid #c8c8c8;background:#fff"></div>
<svg class="a" style="left:603px;top:186px" width="15" height="14" viewBox="0 0 15 14"><circle cx="3.5" cy="3.5" r="2.2" fill="#f0c070"/><path d="M3.5 0V7M0 3.5H7M1 1L6 6M6 1L1 6" stroke="#f0c070" stroke-width="0.8"/><rect x="4.5" y="2.5" width="7" height="6" fill="#fff" stroke="#707070" stroke-width="0.8"/><rect x="4.5" y="2.5" width="7" height="1.5" fill="#3a78c0"/><rect x="7.5" y="6.5" width="7" height="7" fill="#fff" stroke="#707070" stroke-width="0.8"/><rect x="7.5" y="6.5" width="7" height="2" fill="#3a78c0"/><path d="M9 10.5H10M12 10.5H13M9 12.3H10M12 12.3H13" stroke="#9ab8e0" stroke-width="0.7"/></svg>
<svg class="a" style="left:625px;top:192px" width="6" height="4" viewBox="0 0 6 4"><path d="M0 0H5.5L2.75 3Z" fill="#111"/></svg>
<svg class="a" style="left:640px;top:186px" width="16" height="14" viewBox="0 0 16 14"><rect x="0.75" y="1.75" width="12" height="11.5" fill="none" stroke="#5a5a5a" stroke-width="1.3"/><path d="M2.5 12L13 1.5L15 3.5L4.5 14Z" fill="#3a78c0"/><path d="M1.5 14L2.5 11.5L4.5 13.5Z" fill="#3a78c0"/></svg>
<svg class="a" style="left:664px;top:186px" width="16" height="14" viewBox="0 0 16 14"><path d="M1.5 1C5 4 10 9 14.5 14 M14.5 0.5C10 4.5 5.5 9.5 1 13.5" fill="none" stroke="#dd5a38" stroke-width="1.9"/></svg>
<div class="a" style="left:685px;top:186px;width:1px;height:15px;background:#b8b8b8"></div>
<svg class="a" style="left:693px;top:187px" width="13" height="11" viewBox="0 0 13 11"><path d="M6.5 0.5L12.5 6.5H9V10.5H4V6.5H0.5Z" fill="#3a78c0"/></svg>
<svg class="a" style="left:717px;top:187px" width="13" height="11" viewBox="0 0 13 11"><path d="M6.5 10.5L12.5 4.5H9V0.5H4V4.5H0.5Z" fill="#3a78c0"/></svg>
<div class="a" style="left:736px;top:186px;width:1px;height:15px;background:#b8b8b8"></div>
<svg class="a" style="left:742px;top:186px" width="16" height="15" viewBox="0 0 16 15"><circle cx="7.5" cy="7.5" r="4.2" fill="none" stroke="#a8a8a8" stroke-width="2.6"/><path d="M7.5 0V15M0 7.5H15M2.2 2.2L12.8 12.8M12.8 2.2L2.2 12.8" stroke="#a8a8a8" stroke-width="2.4" stroke-dasharray="2.2 10.6 2.2 0"/></svg>
<svg class="a" style="left:764px;top:192px" width="6" height="4" viewBox="0 0 6 4"><path d="M0 0H5.5L2.75 3Z" fill="#111"/></svg>
<div class="a" style="left:876px;top:206px;width:16px;height:334px;background:#efefef"></div>
<div class="a" style="left:876px;top:223px;width:15px;height:261px;background:#c8c8c8"></div>
<svg class="a" style="left:879px;top:210px" width="10" height="8" viewBox="0 0 10 8"><path d="M1 6.5L5 2.5L9 6.5" fill="none" stroke="#555" stroke-width="2"/></svg>
<svg class="a" style="left:879px;top:527px" width="10" height="8" viewBox="0 0 10 8"><path d="M1 1.5L5 5.5L9 1.5" fill="none" stroke="#555" stroke-width="2"/></svg>
<svg width="0" height="0" style="position:absolute"><defs><linearGradient id="eg" x1="0" y1="0" x2="0" y2="1"><stop offset="0" stop-color="#fff"/><stop offset="1" stop-color="#d8d8d8"/></linearGradient></defs></svg>
<div class="a" style="left:609px;top:219px;width:1px;height:315px;background-image:linear-gradient(180deg,#707070 50%,transparent 50%);background-size:1px 2px"></div>
<div class="a" style="left:628px;top:220px;width:1px;height:6px;background-image:linear-gradient(180deg,#707070 50%,transparent 50%);background-size:1px 2px"></div>
<div class="a" style="left:647px;top:236px;width:1px;height:266px;background-image:linear-gradient(180deg,#707070 50%,transparent 50%);background-size:1px 2px"></div>
<div class="a" style="left:666px;top:268px;width:1px;height:59px;background-image:linear-gradient(180deg,#707070 50%,transparent 50%);background-size:1px 2px"></div>
<svg class="a" style="left:605px;top:210px" width="9" height="9" viewBox="0 0 9 9"><rect x="0.5" y="0.5" width="8" height="8" rx="1" fill="url(#eg)" stroke="#8e8e8e"/><path d="M2 4.5H7" stroke="#2f4f9a" stroke-width="1.1"/></svg>
<div class="a" style="left:615px;top:214px;width:6px;height:1px;background-image:linear-gradient(90deg,#707070 50%,transparent 50%);background-size:2px 1px"></div>
<svg class="a" style="left:622px;top:208px" width="12" height="12" viewBox="0 0 12 12"><rect x="0.5" y="0.5" width="11" height="11" fill="#fff" stroke="#6e6e6e"/><rect x="0" y="0" width="12" height="2.2" fill="#3f73b8"/><path d="M2.5 4.5H4M5.5 4.5H7M8.5 4.5H10M2.5 7H4M5.5 7H7M8.5 7H10M2.5 9.5H4M5.5 9.5H7M8.5 9.5H10" stroke="#8fb0de" stroke-width="1"/></svg>
<div class="t" style="left:641px;top:208.55px;font-size:11.4px;line-height:11.4px;color:#000;letter-spacing:-0.5px">Data Sources</div>
<svg class="a" style="left:624px;top:226px" width="9" height="9" viewBox="0 0 9 9"><rect x="0.5" y="0.5" width="8" height="8" rx="1" fill="url(#eg)" stroke="#8e8e8e"/><path d="M2 4.5H7" stroke="#2f4f9a" stroke-width="1.1"/></svg>
<div class="a" style="left:634px;top:230px;width:6px;height:1px;background-image:linear-gradient(90deg,#707070 50%,transparent 50%);background-size:2px 1px"></div>
<svg class="a" style="left:641px;top:223px" width="12" height="13" viewBox="0 0 12 13"><path d="M0 2.5V10.5A6 2.3 0 0 0 12 10.5V2.5Z" fill="#ecc47a"/><ellipse cx="6" cy="2.5" rx="6" ry="2.3" fill="#f5d9a0"/><path d="M0 3.2A6 2.3 0 0 0 12 3.2" fill="none" stroke="#fff" stroke-width="0.8"/></svg>
<div class="t" style="left:660px;top:224.55px;font-size:11.4px;line-height:11.4px;color:#000;letter-spacing:-0.5px">Demo [XML]</div>
<svg class="a" style="left:643px;top:242px" width="9" height="9" viewBox="0 0 9 9"><rect x="0.5" y="0.5" width="8" height="8" rx="1" fill="url(#eg)" stroke="#8e8e8e"/><path d="M2 4.5H7" stroke="#2f4f9a" stroke-width="1.1"/><path d="M4.5 2V7" stroke="#2f4f9a" stroke-width="1.1"/></svg>
<div class="a" style="left:653px;top:246px;width:6px;height:1px;background-image:linear-gradient(90deg,#707070 50%,transparent 50%);background-size:2px 1px"></div>
<svg class="a" style="left:660px;top:240px" width="12" height="12" viewBox="0 0 12 12"><rect x="0.5" y="0.5" width="11" height="11" fill="#fff" stroke="#6e6e6e"/><rect x="0" y="0" width="12" height="2.2" fill="#3f73b8"/><path d="M2.5 4.5H4M5.5 4.5H7M8.5 4.5H10M2.5 7H4M5.5 7H7M8.5 7H10M2.5 9.5H4M5.5 9.5H7M8.5 9.5H10" stroke="#8fb0de" stroke-width="1"/></svg>
<div class="t" style="left:679px;top:240.55px;font-size:11.4px;line-height:11.4px;color:#000;letter-spacing:-0.5px">Auto</div>
<svg class="a" style="left:643px;top:258px" width="9" height="9" viewBox="0 0 9 9"><rect x="0.5" y="0.5" width="8" height="8" rx="1" fill="url(#eg)" stroke="#8e8e8e"/><path d="M2 4.5H7" stroke="#2f4f9a" stroke-width="1.1"/></svg>
<div class="a" style="left:653px;top:262px;width:6px;height:1px;background-image:linear-gradient(90deg,#707070 50%,transparent 50%);background-size:2px 1px"></div>
<svg class="a" style="left:660px;top:256px" width="12" height="12" viewBox="0 0 12 12"><rect x="0.5" y="0.5" width="11" height="11" fill="#fff" stroke="#6e6e6e"/><rect x="0" y="0" width="12" height="2.2" fill="#3f73b8"/><path d="M2.5 4.5H4M5.5 4.5H7M8.5 4.5H10M2.5 7H4M5.5 7H7M8.5 7H10M2.5 9.5H4M5.5 9.5H7M8.5 9.5H10" stroke="#8fb0de" stroke-width="1"/></svg>
<div class="t" style="left:679px;top:256.55px;font-size:11.4px;line-height:11.4px;color:#000;letter-spacing:-0.5px">Categories</div>
<div class="a" style="left:696px;top:302px;width:57px;height:16px;background:#ececec"></div>
<div class="a" style="left:667px;top:278px;width:10px;height:1px;background-image:linear-gradient(90deg,#707070 50%,transparent 50%);background-size:2px 1px"></div>
<svg class="a" style="left:678px;top:273.5px" width="15" height="9.5" viewBox="0 0 15 9.5"><rect x="0.5" y="0.5" width="14" height="8.5" fill="#fff" stroke="#7d8ba0"/><text transform="translate(7.6,7.6) scale(1,1.35)" x="0" y="0" font-size="7.2" font-family="Liberation Sans" font-weight="bold" fill="#1f2f4a" text-anchor="middle" letter-spacing="-0.2">123</text></svg>
<div class="t" style="left:698px;top:272.55px;font-size:11.4px;line-height:11.4px;color:#000;letter-spacing:-0.5px">CategoryID</div>
<div class="a" style="left:667px;top:294px;width:10px;height:1px;background-image:linear-gradient(90deg,#707070 50%,transparent 50%);background-size:2px 1px"></div>
<svg class="a" style="left:678px;top:289.5px" width="15" height="9.5" viewBox="0 0 15 9.5"><rect x="0.5" y="0.5" width="14" height="8.5" fill="#fff" stroke="#7d8ba0"/><text transform="translate(7.6,7.6) scale(1,1.35)" x="0" y="0" font-size="7.2" font-family="Liberation Sans" font-weight="bold" fill="#1f2f4a" text-anchor="middle" letter-spacing="-0.2">abc</text></svg>
<div class="t" style="left:698px;top:288.55px;font-size:11.4px;line-height:11.4px;color:#000;letter-spacing:-0.5px">CategoryName</div>
<div class="a" style="left:667px;top:310px;width:10px;height:1px;background-image:linear-gradient(90deg,#707070 50%,transparent 50%);background-size:2px 1px"></div>
<svg class="a" style="left:678px;top:305.5px" width="15" height="9.5" viewBox="0 0 15 9.5"><rect x="0.5" y="0.5" width="14" height="8.5" fill="#fff" stroke="#7d8ba0"/><text transform="translate(7.6,7.6) scale(1,1.35)" x="0" y="0" font-size="7.2" font-family="Liberation Sans" font-weight="bold" fill="#1f2f4a" text-anchor="middle" letter-spacing="-0.2">abc</text></svg>
<div class="t" style="left:698px;top:304.55px;font-size:11.4px;line-height:11.4px;color:#000;letter-spacing:-0.5px">Description</div>
<div class="a" style="left:667px;top:326px;width:10px;height:1px;background-image:linear-gradient(90deg,#707070 50%,transparent 50%);background-size:2px 1px"></div>
<svg class="a" style="left:678px;top:321.5px" width="15" height="9.5" viewBox="0 0 15 9.5"><rect x="0.5" y="0.5" width="14" height="8.5" fill="#fff" stroke="#7d8ba0"/><path d="M3.5 1.8V3.6M7.5 1.8V3.6M11.5 1.8V3.6" stroke="#2f3f5a" stroke-width="1"/><circle cx="3.5" cy="6.2" r="1.1" fill="none" stroke="#2f3f5a" stroke-width="0.8"/><circle cx="7.5" cy="6.2" r="1.1" fill="none" stroke="#2f3f5a" stroke-width="0.8"/><circle cx="11.5" cy="6.2" r="1.1" fill="none" stroke="#2f3f5a" stroke-width="0.8"/></svg>
<div class="t" style="left:698px;top:320.55px;font-size:11.4px;line-height:11.4px;color:#000;letter-spacing:-0.5px">Picture</div>
<svg class="a" style="left:643px;top:338px" width="9" height="9" viewBox="0 0 9 9"><rect x="0.5" y="0.5" width="8" height="8" rx="1" fill="url(#eg)" stroke="#8e8e8e"/><path d="M2 4.5H7" stroke="#2f4f9a" stroke-width="1.1"/><path d="M4.5 2V7" stroke="#2f4f9a" stroke-width="1.1"/></svg>
<div class="a" style="left:653px;top:342px;width:6px;height:1px;background-image:linear-gradient(90deg,#707070 50%,transparent 50%);background-size:2px 1px"></div>
<svg class="a" style="left:660px;top:336px" width="12" height="12" viewBox="0 0 12 12"><rect x="0.5" y="0.5" width="11" height="11" fill="#fff" stroke="#6e6e6e"/><rect x="0" y="0" width="12" height="2.2" fill="#3f73b8"/><path d="M2.5 4.5H4M5.5 4.5H7M8.5 4.5H10M2.5 7H4M5.5 7H7M8.5 7H10M2.5 9.5H4M5.5 9.5H7M8.5 9.5H10" stroke="#8fb0de" stroke-width="1"/></svg>
<div class="t" style="left:679px;top:336.55px;font-size:11.4px;line-height:11.4px;color:#000;letter-spacing:-0.5px">Countries</div>
<svg class="a" style="left:643px;top:354px" width="9" height="9" viewBox="0 0 9 9"><rect x="0.5" y="0.5" width="8" height="8" rx="1" fill="url(#eg)" stroke="#8e8e8e"/><path d="M2 4.5H7" stroke="#2f4f9a" stroke-width="1.1"/><path d="M4.5 2V7" stroke="#2f4f9a" stroke-width="1.1"/></svg>
<div class="a" style="left:653px;top:358px;width:6px;height:1px;background-image:linear-gradient(90deg,#707070 50%,transparent 50%);background-size:2px 1px"></div>
<svg class="a" style="left:660px;top:352px" width="12" height="12" viewBox="0 0 12 12"><rect x="0.5" y="0.5" width="11" height="11" fill="#fff" stroke="#6e6e6e"/><rect x="0" y="0" width="12" height="2.2" fill="#3f73b8"/><path d="M2.5 4.5H4M5.5 4.5H7M8.5 4.5H10M2.5 7H4M5.5 7H7M8.5 7H10M2.5 9.5H4M5.5 9.5H7M8.5 9.5H10" stroke="#8fb0de" stroke-width="1"/></svg>
<div class="t" style="left:679px;top:352.55px;font-size:11.4px;line-height:11.4px;color:#000;letter-spacing:-0.5px">Customers</div>
<svg class="a" style="left:643px;top:370px" width="9" height="9" viewBox="0 0 9 9"><rect x="0.5" y="0.5" width="8" height="8" rx="1" fill="url(#eg)" stroke="#8e8e8e"/><path d="M2 4.5H7" stroke="#2f4f9a" stroke-width="1.1"/><path d="M4.5 2V7" stroke="#2f4f9a" stroke-width="1.1"/></svg>
<div class="a" style="left:653px;top:374px;width:6px;height:1px;background-image:linear-gradient(90deg,#707070 50%,transparent 50%);background-size:2px 1px"></div>
<svg class="a" style="left:660px;top:368px" width="12" height="12" viewBox="0 0 12 12"><rect x="0.5" y="0.5" width="11" height="11" fill="#fff" stroke="#6e6e6e"/><rect x="0" y="0" width="12" height="2.2" fill="#3f73b8"/><path d="M2.5 4.5H4M5.5 4.5H7M8.5 4.5H10M2.5 7H4M5.5 7H7M8.5 7H10M2.5 9.5H4M5.5 9.5H7M8.5 9.5H10" stroke="#8fb0de" stroke-width="1"/></svg>
<div class="t" style="left:679px;top:368.55px;font-size:11.4px;line-height:11.4px;color:#000;letter-spacing:-0.5px">Employees</div>
<svg class="a" style="left:643px;top:386px" width="9" height="9" viewBox="0 0 9 9"><rect x="0.5" y="0.5" width="8" height="8" rx="1" fill="url(#eg)" stroke="#8e8e8e"/><path d="M2 4.5H7" stroke="#2f4f9a" stroke-width="1.1"/><path d="M4.5 2V7" stroke="#2f4f9a" stroke-width="1.1"/></svg>
<div class="a" style="left:653px;top:390px;width:6px;height:1px;background-image:linear-gradient(90deg,#707070 50%,transparent 50%);background-size:2px 1px"></div>
<svg class="a" style="left:660px;top:384px" width="12" height="12" viewBox="0 0 12 12"><rect x="0.5" y="0.5" width="11" height="11" fill="#fff" stroke="#6e6e6e"/><rect x="0" y="0" width="12" height="2.2" fill="#3f73b8"/><path d="M2.5 4.5H4M5.5 4.5H7M8.5 4.5H10M2.5 7H4M5.5 7H7M8.5 7H10M2.5 9.5H4M5.5 9.5H7M8.5 9.5H10" stroke="#8fb0de" stroke-width="1"/></svg>
<div class="t" style="left:679px;top:384.55px;font-size:11.4px;line-height:11.4px;color:#000;letter-spacing:-0.5px">GlobalGrowth</div>
<svg class="a" style="left:643px;top:402px" width="9" height="9" viewBox="0 0 9 9"><rect x="0.5" y="0.5" width="8" height="8" rx="1" fill="url(#eg)" stroke="#8e8e8e"/><path d="M2 4.5H7" stroke="#2f4f9a" stroke-width="1.1"/><path d="M4.5 2V7" stroke="#2f4f9a" stroke-width="1.1"/></svg>
<div class="a" style="left:653px;top:406px;width:6px;height:1px;background-image:linear-gradient(90deg,#707070 50%,transparent 50%);background-size:2px 1px"></div>
<svg class="a" style="left:660px;top:400px" width="12" height="12" viewBox="0 0 12 12"><rect x="0.5" y="0.5" width="11" height="11" fill="#fff" stroke="#6e6e6e"/><rect x="0" y="0" width="12" height="2.2" fill="#3f73b8"/><path d="M2.5 4.5H4M5.5 4.5H7M8.5 4.5H10M2.5 7H4M5.5 7H7M8.5 7H10M2.5 9.5H4M5.5 9.5H7M8.5 9.5H10" stroke="#8fb0de" stroke-width="1"/></svg>
<div class="t" style="left:679px;top:400.55px;font-size:11.4px;line-height:11.4px;color:#000;letter-spacing:-0.5px">Opec</div>
<svg class="a" style="left:643px;top:418px" width="9" height="9" viewBox="0 0 9 9"><rect x="0.5" y="0.5" width="8" height="8" rx="1" fill="url(#eg)" stroke="#8e8e8e"/><path d="M2 4.5H7" stroke="#2f4f9a" stroke-width="1.1"/><path d="M4.5 2V7" stroke="#2f4f9a" stroke-width="1.1"/></svg>
<div class="a" style="left:653px;top:422px;width:6px;height:1px;background-image:linear-gradient(90deg,#707070 50%,transparent 50%);background-size:2px 1px"></div>
<svg class="a" style="left:660px;top:416px" width="12" height="12" viewBox="0 0 12 12"><rect x="0.5" y="0.5" width="11" height="11" fill="#fff" stroke="#6e6e6e"/><rect x="0" y="0" width="12" height="2.2" fill="#3f73b8"/><path d="M2.5 4.5H4M5.5 4.5H7M8.5 4.5H10M2.5 7H4M5.5 7H7M8.5 7H10M2.5 9.5H4M5.5 9.5H7M8.5 9.5H10" stroke="#8fb0de" stroke-width="1"/></svg>
<div class="t" style="left:679px;top:416.55px;font-size:11.4px;line-height:11.4px;color:#000;letter-spacing:-0.5px">Order Details</div>
<svg class="a" style="left:643px;top:434px" width="9" height="9" viewBox="0 0 9 9"><rect x="0.5" y="0.5" width="8" height="8" rx="1" fill="url(#eg)" stroke="#8e8e8e"/><path d="M2 4.5H7" stroke="#2f4f9a" stroke-width="1.1"/><path d="M4.5 2V7" stroke="#2f4f9a" stroke-width="1.1"/></svg>
<div class="a" style="left:653px;top:438px;width:6px;height:1px;background-image:linear-gradient(90deg,#707070 50%,transparent 50%);background-size:2px 1px"></div>
<svg class="a" style="left:660px;top:432px" width="12" height="12" viewBox="0 0 12 12"><rect x="0.5" y="0.5" width="11" height="11" fill="#fff" stroke="#6e6e6e"/><rect x="0" y="0" width="12" height="2.2" fill="#3f73b8"/><path d="M2.5 4.5H4M5.5 4.5H7M8.5 4.5H10M2.5 7H4M5.5 7H7M8.5 7H10M2.5 9.5H4M5.5 9.5H7M8.5 9.5H10" stroke="#8fb0de" stroke-width="1"/></svg>
<div class="t" style="left:679px;top:432.55px;font-size:11.4px;line-height:11.4px;color:#000;letter-spacing:-0.5px">Orders</div>
<svg class="a" style="left:643px;top:450px" width="9" height="9" viewBox="0 0 9 9"><rect x="0.5" y="0.5" width="8" height="8" rx="1" fill="url(#eg)" stroke="#8e8e8e"/><path d="M2 4.5H7" stroke="#2f4f9a" stroke-width="1.1"/><path d="M4.5 2V7" stroke="#2f4f9a" stroke-width="1.1"/></svg>
<div class="a" style="left:653px;top:454px;width:6px;height:1px;background-image:linear-gradient(90deg,#707070 50%,transparent 50%);background-size:2px 1px"></div>
<svg class="a" style="left:660px;top:448px" width="12" height="12" viewBox="0 0 12 12"><rect x="0.5" y="0.5" width="11" height="11" fill="#fff" stroke="#6e6e6e"/><rect x="0" y="0" width="12" height="2.2" fill="#3f73b8"/><path d="M2.5 4.5H4M5.5 4.5H7M8.5 4.5H10M2.5 7H4M5.5 7H7M8.5 7H10M2.5 9.5H4M5.5 9.5H7M8.5 9.5H10" stroke="#8fb0de" stroke-width="1"/></svg>
<div class="t" style="left:679px;top:448.55px;font-size:11.4px;line-height:11.4px;color:#000;letter-spacing:-0.5px">Products</div>
<svg class="a" style="left:643px;top:466px" width="9" height="9" viewBox="0 0 9 9"><rect x="0.5" y="0.5" width="8" height="8" rx="1" fill="url(#eg)" stroke="#8e8e8e"/><path d="M2 4.5H7" stroke="#2f4f9a" stroke-width="1.1"/><path d="M4.5 2V7" stroke="#2f4f9a" stroke-width="1.1"/></svg>
<div class="a" style="left:653px;top:470px;width:6px;height:1px;background-image:linear-gradient(90deg,#707070 50%,transparent 50%);background-size:2px 1px"></div>
<svg class="a" style="left:660px;top:464px" width="12" height="12" viewBox="0 0 12 12"><rect x="0.5" y="0.5" width="11" height="11" fill="#fff" stroke="#6e6e6e"/><rect x="0" y="0" width="12" height="2.2" fill="#3f73b8"/><path d="M2.5 4.5H4M5.5 4.5H7M8.5 4.5H10M2.5 7H4M5.5 7H7M8.5 7H10M2.5 9.5H4M5.5 9.5H7M8.5 9.5H10" stroke="#8fb0de" stroke-width="1"/></svg>
<div class="t" style="left:679px;top:464.55px;font-size:11.4px;line-height:11.4px;color:#000;letter-spacing:-0.5px">Shippers</div>
<svg class="a" style="left:643px;top:482px" width="9" height="9" viewBox="0 0 9 9"><rect x="0.5" y="0.5" width="8" height="8" rx="1" fill="url(#eg)" stroke="#8e8e8e"/><path d="M2 4.5H7" stroke="#2f4f9a" stroke-width="1.1"/><path d="M4.5 2V7" stroke="#2f4f9a" stroke-width="1.1"/></svg>
<div class="a" style="left:653px;top:486px;width:6px;height:1px;background-image:linear-gradient(90deg,#707070 50%,transparent 50%);background-size:2px 1px"></div>
<svg class="a" style="left:660px;top:480px" width="12" height="12" viewBox="0 0 12 12"><rect x="0.5" y="0.5" width="11" height="11" fill="#fff" stroke="#6e6e6e"/><rect x="0" y="0" width="12" height="2.2" fill="#3f73b8"/><path d="M2.5 4.5H4M5.5 4.5H7M8.5 4.5H10M2.5 7H4M5.5 7H7M8.5 7H10M2.5 9.5H4M5.5 9.5H7M8.5 9.5H10" stroke="#8fb0de" stroke-width="1"/></svg>
<div class="t" style="left:679px;top:480.55px;font-size:11.4px;line-height:11.4px;color:#000;letter-spacing:-0.5px">States</div>
<svg class="a" style="left:643px;top:498px" width="9" height="9" viewBox="0 0 9 9"><rect x="0.5" y="0.5" width="8" height="8" rx="1" fill="url(#eg)" stroke="#8e8e8e"/><path d="M2 4.5H7" stroke="#2f4f9a" stroke-width="1.1"/><path d="M4.5 2V7" stroke="#2f4f9a" stroke-width="1.1"/></svg>
<div class="a" style="left:653px;top:502px;width:6px;height:1px;background-image:linear-gradient(90deg,#707070 50%,transparent 50%);background-size:2px 1px"></div>
<svg class="a" style="left:660px;top:496px" width="12" height="12" viewBox="0 0 12 12"><rect x="0.5" y="0.5" width="11" height="11" fill="#fff" stroke="#6e6e6e"/><rect x="0" y="0" width="12" height="2.2" fill="#3f73b8"/><path d="M2.5 4.5H4M5.5 4.5H7M8.5 4.5H10M2.5 7H4M5.5 7H7M8.5 7H10M2.5 9.5H4M5.5 9.5H7M8.5 9.5H10" stroke="#8fb0de" stroke-width="1"/></svg>
<div class="t" style="left:679px;top:496.55px;font-size:11.4px;line-height:11.4px;color:#000;letter-spacing:-0.5px">Suppliers</div>
<div class="a" style="left:610px;top:518px;width:10px;height:1px;background-image:linear-gradient(90deg,#707070 50%,transparent 50%);background-size:2px 1px"></div>
<svg class="a" style="left:621px;top:513.5px" width="15" height="8.5" viewBox="0 0 15 8.5"><rect x="0.5" y="0.5" width="14" height="7.5" fill="#fff" stroke="#6e7f98"/><rect x="0" y="0" width="1.5" height="8.5" fill="#3f73b8"/><text x="8.3" y="6.9" font-size="6.6" font-family="Liberation Sans" font-weight="bold" fill="#2f3f5a" text-anchor="middle" letter-spacing="-0.7">UAR</text></svg>
<div class="t" style="left:641px;top:512.55px;font-size:11.4px;line-height:11.4px;color:#000;letter-spacing:-0.5px">Variables</div>
<svg class="a" style="left:605px;top:530px" width="9" height="9" viewBox="0 0 9 9"><rect x="0.5" y="0.5" width="8" height="8" rx="1" fill="url(#eg)" stroke="#8e8e8e"/><path d="M2 4.5H7" stroke="#2f4f9a" stroke-width="1.1"/><path d="M4.5 2V7" stroke="#2f4f9a" stroke-width="1.1"/></svg>
<div class="a" style="left:615px;top:534px;width:5px;height:1px;background-image:linear-gradient(90deg,#707070 50%,transparent 50%);background-size:2px 1px"></div>
<svg class="a" style="left:621px;top:529px" width="15" height="9" viewBox="0 0 15 9"><rect x="0.5" y="0.5" width="14" height="8" fill="#fff" stroke="#6e7f98"/><text x="7.5" y="7.4" font-size="8" font-family="Liberation Sans" font-weight="bold" fill="#2f3f5a" text-anchor="middle" letter-spacing="-0.3">Σ#</text></svg>
<div class="t" style="left:641px;top:528.55px;font-size:11.4px;line-height:11.4px;color:#000;letter-spacing:-0.5px">System Variables</div>
<svg class="a" style="left:603px;top:546px" width="17" height="17" viewBox="0 0 17 17"><rect x="0.5" y="5.5" width="13" height="10" fill="#fff" stroke="#707070"/><path d="M2.5 9.5H5.5M7.5 9.5H11M2.5 11.5H5.5M7.5 11.5H11M2.5 13.5H5.5M7.5 13.5H11" stroke="#8fb0de" stroke-width="1"/><path d="M3 8.5C4 6 5.5 3 8 1.5C10 0.5 12 0.8 13.5 1.5L14 4.5C12 5.5 9.5 6 7.5 6.5C6 7 4.5 8 3 8.5Z" fill="#e8c060" stroke="#8a7040" stroke-width="0.7"/><path d="M13.5 0.8L15.5 0.8L15 5L14 4.5Z" fill="#4caf50"/></svg>
<div class="t" style="left:626px;top:547.65px;font-size:11.4px;line-height:11.4px;color:#111;letter-spacing:-0.606px;">Properties</div>
<div class="a" style="left:681px;top:543px;width:1px;height:21px;background:#c8c8c8"></div>
<div class="a" style="left:762px;top:543px;width:1px;height:21px;background:#c8c8c8"></div>
<div class="a" style="left:681px;top:562px;width:82px;height:2px;background:#2a4f9c"></div>
<svg class="a" style="left:686px;top:547px" width="16" height="14" viewBox="0 0 16 14"><rect x="6.5" y="1.5" width="8" height="7.5" fill="#fff" stroke="#707070"/><rect x="6" y="1" width="9" height="3" fill="#3f73b8"/><rect x="0.5" y="3.5" width="8" height="8" fill="#fff" stroke="#707070"/><rect x="0" y="3" width="9" height="3" fill="#3f73b8"/><path d="M2.5 8.5H3.5M5.5 8.5H6.5M2.5 10H3.5M5.5 10H6.5M11 6H12M12.5 7.5H13.5" stroke="#b0c4e0" stroke-width="0.8"/></svg>
<div class="t" style="left:708.4px;top:547.65px;font-size:11.4px;line-height:11.4px;color:#2a4f9c;letter-spacing:-0.500px;">Dictionary</div>
<svg class="a" style="left:767px;top:546px" width="16" height="16" viewBox="0 0 16 16"><rect x="0.5" y="0.5" width="15" height="15" fill="#fff" stroke="#707070"/><rect x="3" y="3" width="5" height="2" fill="#3a78c0"/><path d="M5.5 5V13M5.5 7.3H8M5.5 11.3H8" fill="none" stroke="#3a78c0" stroke-width="1" stroke-dasharray="1 1"/><rect x="8" y="6.5" width="4" height="1.7" fill="#3a78c0"/><rect x="8" y="10.5" width="4" height="1.7" fill="#3a78c0"/></svg>
<div class="t" style="left:790.3px;top:547.65px;font-size:11.4px;line-height:11.4px;color:#111;letter-spacing:-0.420px;">Report Tree</div>
<div class="a" style="left:1px;top:568px;width:898px;height:32px;background:#2b579a"></div>
<svg class="a" style="left:15px;top:579px" width="7" height="11" viewBox="0 0 7 11"><path d="M0 0L6.5 5.25L0 10.5Z" fill="#fff"/></svg>
<div class="t" style="left:31.5px;top:578.01px;font-size:11.8px;line-height:11.8px;color:#fff;letter-spacing:-0.227px;">Check for Issues</div>
<div class="a" style="left:124px;top:573px;width:1px;height:20px;background:#8ea6cf"></div>
<div class="t" style="left:132.7px;top:578.01px;font-size:11.8px;line-height:11.8px;color:#fff;letter-spacing:-0.420px;">Chart1</div>
<div class="a" style="left:175px;top:573px;width:1px;height:20px;background:#8ea6cf"></div>
<div class="t" style="left:180.3px;top:578.01px;font-size:11.8px;line-height:11.8px;color:#fff;letter-spacing:-0.253px;">X:0.00&nbsp; Y:0.00&nbsp; Width:1200.00&nbsp; Height:600.00</div>
<div class="a" style="left:525px;top:573px;width:1px;height:20px;background:#8ea6cf"></div>
<svg class="a" style="left:540px;top:576px" width="16" height="15" viewBox="0 0 16 15"><rect x="0.65" y="0.65" width="14.7" height="13.7" fill="none" stroke="#fff" stroke-width="1.3"/><path d="M5.5 4.5H10.5M5.5 7.5H10.5M5.5 10.5H10.5" stroke="#fff" stroke-width="1.2"/><path d="M1 7.5L4 4.8V10.2Z M15 7.5L12 4.8V10.2Z" fill="#fff"/></svg>
<svg class="a" style="left:576px;top:576px" width="16" height="15" viewBox="0 0 16 15"><rect x="0.65" y="0.65" width="14.7" height="13.7" fill="none" stroke="#fff" stroke-width="1.3"/><path d="M3 6.5H13M3 8.5H13" stroke="#fff" stroke-width="1"/><path d="M8 1.8L4.8 4.8H11.2Z M8 13.2L4.8 10.2H11.2Z" fill="#fff"/></svg>
<svg class="a" style="left:612px;top:576px" width="16" height="15" viewBox="0 0 16 15"><rect x="0.65" y="0.65" width="14.7" height="13.7" fill="none" stroke="#fff" stroke-width="1.3"/><rect x="4.5" y="1.5" width="7" height="11" fill="none" stroke="#fff" stroke-width="1"/><path d="M6.5 4.5H9.5M6.5 6.5H9.5M6.5 8.5H9.5M6.5 10.5H9.5" stroke="#fff" stroke-width="1"/></svg>
<svg class="a" style="left:648px;top:576px" width="16" height="15" viewBox="0 0 16 15"><rect x="0.65" y="0.65" width="14.7" height="13.7" fill="none" stroke="#fff" stroke-width="1.3"/><text x="8" y="10.2" font-size="7.8" font-weight="bold" font-family="Liberation Sans" fill="#fff" text-anchor="middle" letter-spacing="-0.6">100</text></svg>
<div class="t" style="left:692.9px;top:578.01px;font-size:11.8px;line-height:11.8px;color:#fff;letter-spacing:-0.750px;">41%</div>
<div class="a" style="left:741px;top:583px;width:9px;height:2px;background:#fff"></div>
<div class="a" style="left:753px;top:584px;width:96px;height:1px;background:#6f8fc4"></div>
<div class="a" style="left:802px;top:580px;width:1px;height:7px;background:#6f8fc4"></div>
<svg class="a" style="left:770px;top:577px" width="9" height="13" viewBox="0 0 9 13"><path d="M0.5 1Q0.5 0.5 1 0.5H8Q8.5 0.5 8.5 1V8.5L4.5 12.5L0.5 8.5Z" fill="#fff" stroke="#d0d8e8" stroke-width="0.5"/></svg>
<svg class="a" style="left:852px;top:579px" width="10" height="10" viewBox="0 0 10 10"><path d="M0.5 5H9.5M5 0.5V9.5" stroke="#fff" stroke-width="2"/></svg>
<svg class="a" style="left:883px;top:585px" width="12" height="13" viewBox="0 0 12 13"><circle cx="9.5" cy="1.8" r="1.1" fill="#d8e0ee"/><circle cx="5.8" cy="5.8" r="1.1" fill="#d8e0ee"/><circle cx="9.5" cy="5.8" r="1.1" fill="#d8e0ee"/><circle cx="1.8" cy="9.8" r="1.1" fill="#d8e0ee"/><circle cx="5.8" cy="9.8" r="1.1" fill="#d8e0ee"/><circle cx="9.5" cy="9.8" r="1.1" fill="#d8e0ee"/></svg>
</body></html>
